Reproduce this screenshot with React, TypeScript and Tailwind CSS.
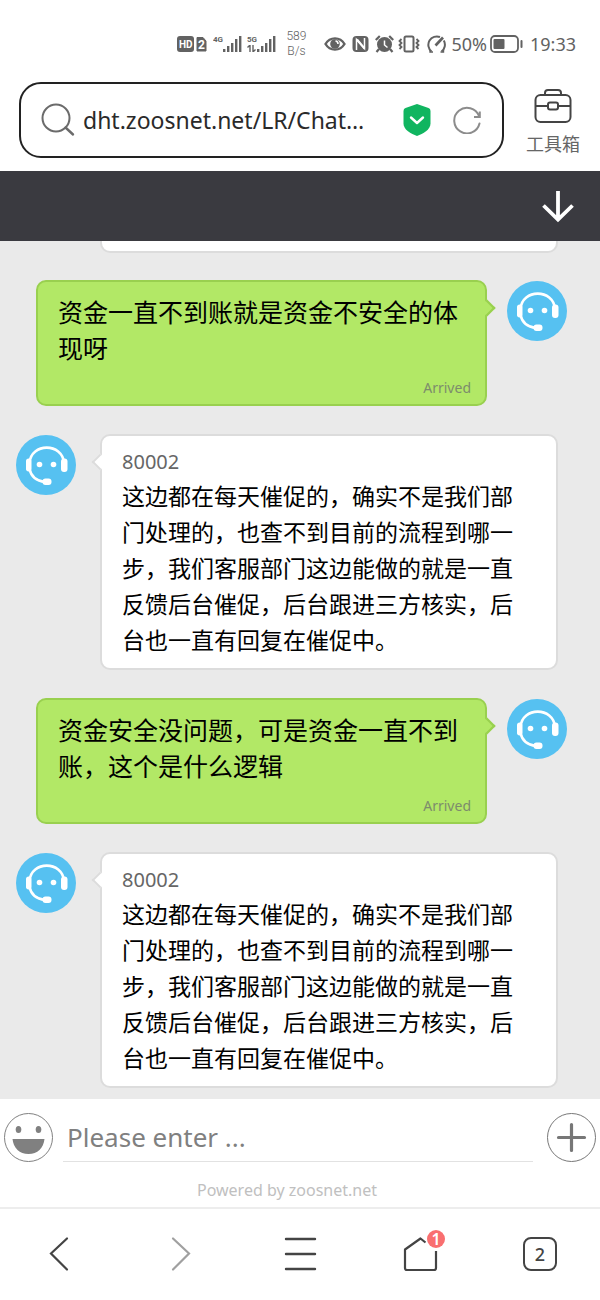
// src/App.tsx
import type { ReactNode } from 'react';
import { clsx } from 'clsx';

interface Message {
  id: number;
  from: 'me' | 'agent';
  text: string;
}

const REPLY =
  '这边都在每天催促的，确实不是我们部门处理的，也查不到目前的流程到哪一步，我们客服部门这边能做的就是一直反馈后台催促，后台跟进三方核实，后台也一直有回复在催促中。';

const MESSAGES: Message[] = [
  { id: 1, from: 'me', text: '资金一直不到账就是资金不安全的体现呀' },
  { id: 2, from: 'agent', text: REPLY },
  { id: 3, from: 'me', text: '资金安全没问题，可是资金一直不到账，这个是什么逻辑' },
  { id: 4, from: 'agent', text: REPLY },
];

function Signal({ label, data }: { label: string; data?: boolean }) {
  return (
    <svg width="29" height="20" viewBox="0 0 29 20" fill="currentColor" aria-hidden="true">
      <text x="0" y="8" fontSize="8" fontWeight="700" fontFamily="Roboto, sans-serif">
        {label}
      </text>
      {data && <path d="M3 11v7M0.500 13.500l2-2M6 11v7M8.500 15.500l-2 2" stroke="currentColor" strokeWidth="1.4" />}
      <rect x="10" y="15" width="2.400" height="3" />
      <rect x="14" y="12" width="2.400" height="6" />
      <rect x="18" y="9" width="2.400" height="9" />
      <rect x="22" y="5" width="2.400" height="13" />
      <rect x="26" y="2" width="2.400" height="16" />
    </svg>
  );
}

/** Phone status bar: network on the left of the group, battery and clock on the right. */
function StatusBar() {
  return (
    <div className="flex h-[82px] items-start justify-end pt-[30px] pr-6 text-[#626262]">
      <div className="flex h-7 items-center">
        <svg className="mr-1.5" width="30" height="18" viewBox="0 0 30 18" aria-hidden="true">
          <rect x="0" y="1" width="17" height="16" rx="3" fill="currentColor" />
          <text x="2" y="13" fontSize="10" fontWeight="700" fontFamily="Roboto, sans-serif" fill="#fff">
            HD
          </text>
          <path d="M20 2.500h6l3 3.500V16h-9z" fill="currentColor" stroke="currentColor" strokeLinejoin="round" />
          <text x="21" y="13.500" fontSize="12" fontWeight="700" fontFamily="Roboto, sans-serif" fill="#fff">
            2
          </text>
        </svg>
        <Signal label="4G" />
        <span className="w-[5px]" />
        <Signal label="5G" data />
        <span className="mx-2 w-6 text-center font-[Roboto] text-xs leading-[15px] font-light">589 B/s</span>
        <svg className="ml-2" width="22" height="16" viewBox="0 0 22 16" aria-hidden="true">
          <path d="M1.500 8C6 .5 16 .5 20.500 8 16 15.500 6 15.500 1.500 8z" fill="none" stroke="currentColor" strokeWidth="2.400" />
          <circle cx="11" cy="8" r="4.800" fill="currentColor" />
          <path d="M11.500 5a2.800 2.800 0 0 1 2.500 3" fill="none" stroke="#fff" strokeWidth="1.500" />
        </svg>
        <svg className="ml-1.5" width="17" height="18" viewBox="0 0 17 18" aria-hidden="true">
          <rect x="0.500" y="1" width="16" height="16" rx="4" fill="currentColor" />
          <path d="M4.500 15V4.500l8 9V3" fill="none" stroke="#fff" strokeWidth="1.500" />
          <path d="M5 4.500l7.500 9" stroke="#fff" strokeWidth="2" />
        </svg>
        <svg className="ml-1.5" width="19" height="18" viewBox="0 0 19 18" aria-hidden="true">
          <circle cx="9.500" cy="9.500" r="7.500" fill="currentColor" />
          <path d="M.800 5l4-4M18.200 5l-4-4M4 14l-2.500 3M15 14l2.500 3" stroke="currentColor" strokeWidth="2.200" />
          <path d="M9.500 5.500V10l3 2.500" fill="none" stroke="#fff" strokeWidth="1.500" />
        </svg>
        <svg className="ml-1" width="22" height="18" viewBox="0 0 22 18" fill="none" stroke="currentColor" aria-hidden="true">
          <rect x="6.500" y="1.500" width="9" height="15" rx="1.500" strokeWidth="2" />
          <path d="M3.500 4l-2 2 2 2-2 2 2 2-2 2M18.500 4l2 2-2 2 2 2-2 2 2 2" strokeWidth="1.800" />
        </svg>
        <svg className="ml-1.5" width="21" height="18" viewBox="0 0 21 18" fill="none" stroke="currentColor" aria-hidden="true">
          <path d="M5.500 16.500A8.500 8.500 0 0 1 14 2M17.800 5.500a8.500 8.500 0 0 1-2.300 11" strokeWidth="2" />
          <path d="M4 15v2h3M14.500 17h3v-2" strokeWidth="1.400" />
          <path d="M9.500 10.500L17 2.500" strokeWidth="2.600" />
        </svg>
        <span className="ml-1 text-lg">50%</span>
        <svg className="ml-[3px]" width="34" height="18" viewBox="0 0 34 18" aria-hidden="true">
          <rect x="1" y="1" width="27" height="16" rx="4" fill="none" stroke="currentColor" strokeWidth="1.800" />
          <rect x="3.500" y="4" width="11" height="10" rx="1" fill="currentColor" />
          <rect x="30.500" y="5" width="2" height="8" rx="1" fill="currentColor" />
        </svg>
        <span className="ml-1.5 text-lg">19:33</span>
      </div>
    </div>
  );
}

function AddressBar() {
  return (
    <div className="flex h-[89px] items-start pr-5 pl-[19px]">
      <div className="flex h-[76px] min-w-0 flex-1 items-center rounded-[22px] border-2 border-[#222] pr-[21px] pl-5">
        <svg className="shrink-0" width="34" height="34" viewBox="0 0 34 34" fill="none" stroke="#6b6b6b" strokeWidth="2" aria-hidden="true">
          <circle cx="15" cy="15" r="13.500" />
          <path d="M24.500 24.500l7.500 7" strokeLinecap="round" strokeWidth="2.400" />
        </svg>
        <input
          className="ml-2 min-w-0 flex-1 bg-transparent text-[23px] text-[#2a2a2a] outline-none"
          aria-label="Address"
          defaultValue="dht.zoosnet.net/LR/Chat…"
        />
        <svg className="shrink-0" width="28" height="34" viewBox="0 0 28 34" aria-hidden="true">
          <path d="M14 1l11.500 4Q27.500 5.700 27.500 8v12.500C27.500 27 20 30.500 14 33 8 30.500.5 27 .5 20.500V8Q.5 5.700 2.500 5z" fill="#10b560" />
          <path d="M8 14.500l6 5.500 6-5.500" fill="none" stroke="#fff" strokeWidth="2.400" strokeLinecap="round" strokeLinejoin="round" />
        </svg>
        <button type="button" className="ml-[22px] shrink-0" aria-label="Reload">
          <svg width="28" height="28" viewBox="0 0 28 28" fill="none" stroke="#8c8c8c" strokeWidth="2">
            <path d="M26.500 17.500A12.800 12.800 0 1 1 26 10" strokeLinecap="round" />
            <path d="M26.800 5.500v5.500H21" />
          </svg>
        </button>
      </div>
      <button type="button" className="ml-[22px] flex flex-col items-center pt-1.5 text-lg leading-6 text-[#666]">
        <svg className="mb-2" width="38" height="36" viewBox="0 0 38 36" fill="none" stroke="#444" strokeWidth="2">
          <path d="M11 7V5q0-3 3-3h10q3 0 3 3v2" />
          <rect x="1.500" y="7" width="35" height="27" rx="5" />
          <path d="M2 18h12M24 18h12" />
          <rect x="14" y="14.500" width="10" height="7" rx="2" />
        </svg>
        工具箱
      </button>
    </div>
  );
}

function Avatar() {
  return (
    <svg className="mt-px shrink-0" width="60" height="60" viewBox="0 0 60 60" fill="none" aria-hidden="true">
      <circle cx="30" cy="30" r="30" fill="#56c1f1" />
      <path d="M13.500 28C15 7.500 46.500 7.500 48 28" stroke="#fff" strokeWidth="2.600" />
      <path d="M13.500 34C15 41 20 46 29 47" stroke="#fff" strokeWidth="2.600" />
      <rect x="10" y="23.500" width="5.500" height="13" rx="2.700" fill="#fff" />
      <rect x="45" y="23.500" width="6.500" height="13.500" rx="3" fill="#fff" />
      <rect x="26.500" y="43.500" width="9" height="6.500" rx="3" fill="#fff" />
      <circle cx="23.500" cy="29.500" r="2.800" fill="#fff" />
      <circle cx="37.500" cy="29.500" r="2.800" fill="#fff" />
    </svg>
  );
}

function MessageRow({ message }: { message: Message }) {
  const mine = message.from === 'me';

  return (
    <li className={clsx('flex items-start', mine ? 'gap-5 pr-[33px] pl-9' : 'flex-row-reverse gap-6 pr-[42px] pl-4')}>
      <div
        className={clsx(
          'relative min-w-0 flex-1 rounded-[10px] border-2 pt-3 pl-5',
          mine ? 'border-[#99d04f] bg-[#b2e866] pr-3.5 pb-1.5' : 'border-[#dcdcdc] bg-white pr-8 pb-2.5',
        )}
      >
        <span
          aria-hidden="true"
          className={clsx(
            'absolute top-5 size-3 rotate-45 border-2',
            mine
              ? '-right-2 border-b-0 border-l-0 border-[#99d04f] bg-[#b2e866]'
              : '-left-2 border-t-0 border-r-0 border-[#dcdcdc] bg-white',
          )}
        />
        {mine ? (
          <>
            <p className="text-[25px] leading-9 text-black">{message.text}</p>
            <p className="mt-3 text-right text-sm leading-5 text-[#7d8c6c]">Arrived</p>
          </>
        ) : (
          <>
            <p className="text-xl leading-7 text-[#666]">80002</p>
            <p className="mt-0.5 text-[23px] leading-9 text-black">{message.text}</p>
          </>
        )}
      </div>
      <Avatar />
    </li>
  );
}

function Composer() {
  return (
    <form className="bg-white px-1 pt-3.5" onSubmit={(e) => e.preventDefault()}>
      <div className="flex">
        <button type="button" aria-label="Emoji" className="shrink-0">
          <svg width="49" height="49" viewBox="0 0 49 49" fill="#808080">
            <circle cx="24.500" cy="24.500" r="24" fill="none" stroke="#808080" />
            <ellipse cx="14.500" cy="16.500" rx="2.800" ry="3.500" />
            <ellipse cx="34.500" cy="16.500" rx="2.800" ry="3.500" />
            <path d="M8.500 26h32c-1 9-7 15-16 15s-15-6-16-15z" />
          </svg>
        </button>
        <input
          className="mr-3.5 ml-2.5 min-w-0 flex-1 border-b border-[#e2e2e2] px-1 text-[26px] outline-none placeholder:text-[#808080]"
          aria-label="Message"
          placeholder="Please enter ..."
        />
        <button type="button" aria-label="More" className="shrink-0">
          <svg width="49" height="49" viewBox="0 0 49 49" fill="none" stroke="#777">
            <circle cx="24.500" cy="24.500" r="24" />
            <path d="M24.500 11.500v26M11.500 24.500h26" strokeWidth="3.200" strokeLinecap="round" />
          </svg>
        </button>
      </div>
      <p className="pt-[18px] pr-[26px] pb-[7px] text-center text-base leading-5 text-[#c0c0c0]">
        Powered by zoosnet.net
      </p>
    </form>
  );
}

function NavButton({ label, children }: { label: string; children: ReactNode }) {
  return (
    <button type="button" aria-label={label} className="flex justify-center">
      {children}
    </button>
  );
}

function BrowserNav() {
  return (
    <nav className="grid grid-cols-5 items-center border-t-2 border-[#ededed] bg-white pt-[27px] pb-7 text-[#444]">
      <NavButton label="Back">
        <svg width="36" height="36" viewBox="0 0 36 36" fill="none" stroke="currentColor" strokeWidth="2.200" strokeLinecap="round">
          <path d="M25 2.500L9 17.500 25 33.500" />
        </svg>
      </NavButton>
      <NavButton label="Forward">
        <svg width="36" height="36" viewBox="0 0 36 36" fill="none" stroke="#a0a0a0" strokeWidth="2.200" strokeLinecap="round">
          <path d="M11 2.500L27 17.500 11 33.500" />
        </svg>
      </NavButton>
      <NavButton label="Menu">
        <svg width="36" height="36" viewBox="0 0 36 36" stroke="currentColor" strokeWidth="2.400" strokeLinecap="round">
          <path d="M4 3h29M4 18h29M4 33h29" />
        </svg>
      </NavButton>
      <NavButton label="Home">
        <span className="relative">
          <svg width="36" height="36" viewBox="0 0 36 36" fill="none" stroke="currentColor" strokeWidth="2.200" strokeLinejoin="round">
            <path d="M23.500 6.500L18.500 2.500 3 13.500V32q0 2 2 2H32q2 0 2-2V15" />
          </svg>
          <span className="absolute -top-1.5 -right-[7px] flex size-[18px] items-center justify-center rounded-full bg-[#f96f70] text-base leading-none font-semibold text-white">
            1
          </span>
        </span>
      </NavButton>
      <NavButton label="Tabs">
        <span className="flex size-[34px] items-center justify-center rounded-lg border-2 border-[#444] text-lg leading-none font-medium">
          2
        </span>
      </NavButton>
    </nav>
  );
}

export default function App() {
  return (
    <div className="flex min-h-screen flex-col bg-white font-['Noto_Sans','Noto_Sans_CJK_SC',sans-serif]">
      <StatusBar />
      <AddressBar />
      <header className="flex h-[70px] items-center justify-end bg-[#3a3a40] pr-6">
        <button type="button" aria-label="Scroll to bottom">
          <svg width="36" height="36" viewBox="0 0 36 36" fill="none" stroke="#fff" strokeWidth="3.800">
            <path d="M18 3v28M3.500 17.500L18 31.500l14.500-14" />
          </svg>
        </button>
      </header>
      <main className="flex-1 bg-[#eaeaea] pb-2.5">
        <div className="mr-[42px] ml-[100px] h-3 rounded-b-[10px] border-2 border-t-0 border-[#dcdcdc] bg-white" />
        <ul className="mt-[27px] flex flex-col gap-7">
          {MESSAGES.map((message) => (
            <MessageRow key={message.id} message={message} />
          ))}
        </ul>
      </main>
      <Composer />
      <BrowserNav />
    </div>
  );
}
